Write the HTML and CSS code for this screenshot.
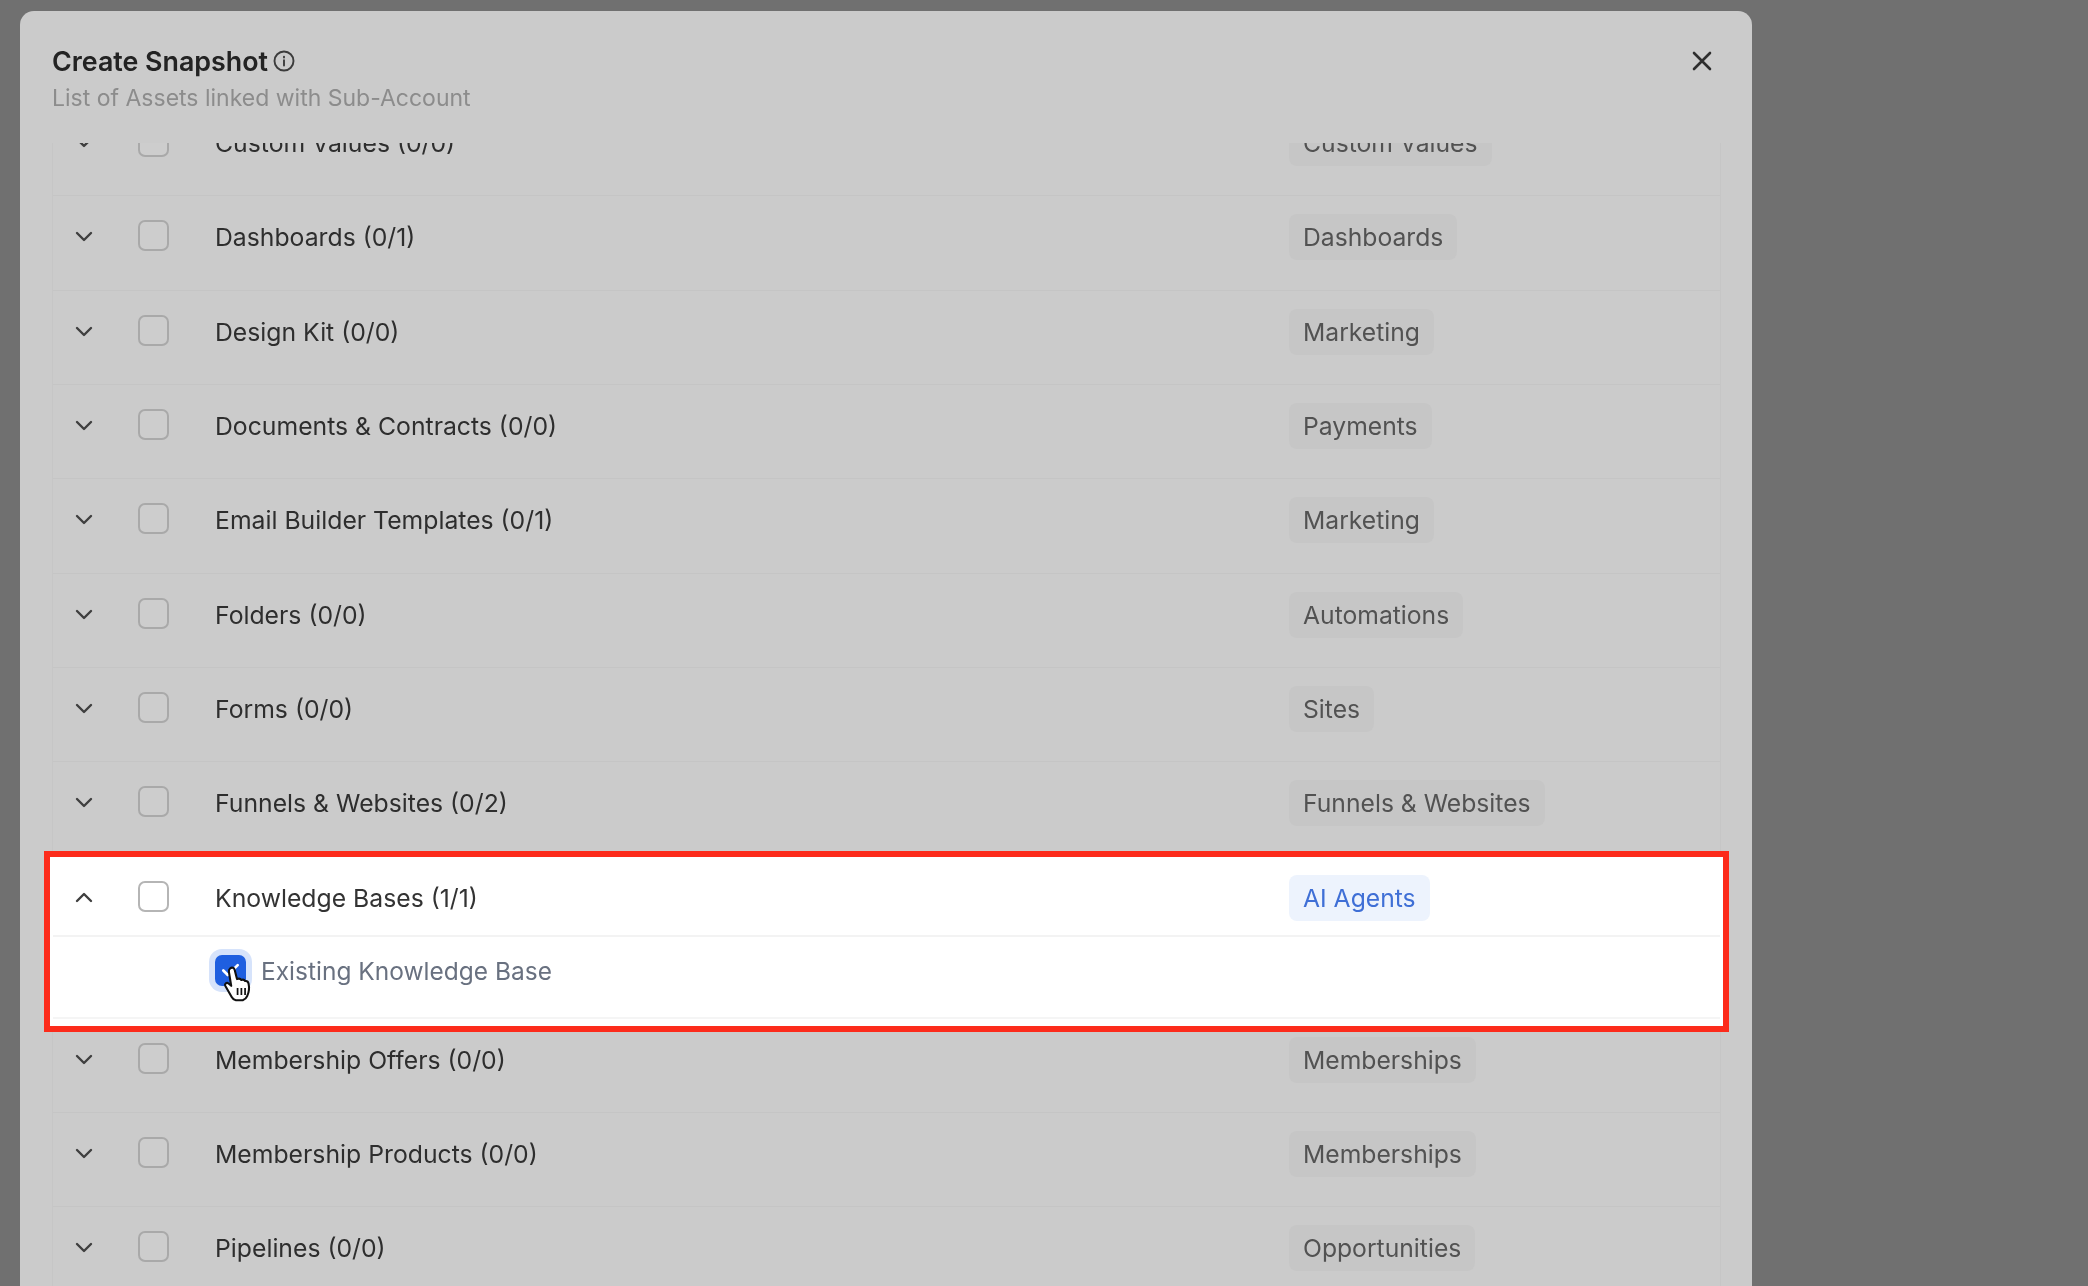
FILE: index.html
```html
<!DOCTYPE html>
<html lang="en">
<head>
<meta charset="utf-8">
<title>Create Snapshot</title>
<link rel="stylesheet" href="styles.css">
</head>
<body>
<div class="page">
  <section class="modal">
    <header class="modal-head">
      <div class="head-text">
        <h1 class="title">Create Snapshot
          <svg class="info" viewBox="0 0 22 22" aria-hidden="true"><circle cx="11" cy="11" r="9.5"/><path d="M11 10.2v5.3M11 6.6v.9"/></svg>
        </h1>
        <p class="subtitle">List of Assets linked with Sub-Account</p>
      </div>
      <svg class="close" viewBox="0 0 20 20" aria-hidden="true"><path d="M2 2l16 16M18 2L2 18"/></svg>
    </header>
    <div class="list-clip">
      <div class="list">
        <div class="row"><svg class="chev" viewBox="0 0 18 11"><path d="M2 2l7 7 7-7"/></svg><span class="box"></span><span class="label">Custom Values (0/0)</span><span class="tag">Custom Values</span></div>
        <div class="row"><svg class="chev" viewBox="0 0 18 11"><path d="M2 2l7 7 7-7"/></svg><span class="box"></span><span class="label">Dashboards (0/1)</span><span class="tag">Dashboards</span></div>
        <div class="row"><svg class="chev" viewBox="0 0 18 11"><path d="M2 2l7 7 7-7"/></svg><span class="box"></span><span class="label">Design Kit (0/0)</span><span class="tag">Marketing</span></div>
        <div class="row"><svg class="chev" viewBox="0 0 18 11"><path d="M2 2l7 7 7-7"/></svg><span class="box"></span><span class="label">Documents &amp; Contracts (0/0)</span><span class="tag">Payments</span></div>
        <div class="row"><svg class="chev" viewBox="0 0 18 11"><path d="M2 2l7 7 7-7"/></svg><span class="box"></span><span class="label">Email Builder Templates (0/1)</span><span class="tag">Marketing</span></div>
        <div class="row"><svg class="chev" viewBox="0 0 18 11"><path d="M2 2l7 7 7-7"/></svg><span class="box"></span><span class="label">Folders (0/0)</span><span class="tag">Automations</span></div>
        <div class="row"><svg class="chev" viewBox="0 0 18 11"><path d="M2 2l7 7 7-7"/></svg><span class="box"></span><span class="label">Forms (0/0)</span><span class="tag">Sites</span></div>
        <div class="row"><svg class="chev" viewBox="0 0 18 11"><path d="M2 2l7 7 7-7"/></svg><span class="box"></span><span class="label">Funnels &amp; Websites (0/2)</span><span class="tag">Funnels &amp; Websites</span></div>
        <div class="group">
          <div class="row open"><svg class="chev" viewBox="0 0 18 11"><path d="M2 9l7-7 7 7"/></svg><span class="box"></span><span class="label">Knowledge Bases (1/1)</span><span class="tag tag-blue">AI Agents</span></div>
          <div class="subrow">
            <span class="box checked"><svg viewBox="0 0 30 30"><path d="M7 15l5 5 11-11"/></svg></span>
            <span class="sublabel">Existing Knowledge Base</span>
            <svg class="hand" viewBox="0 0 26 32" aria-hidden="true"><path d="M7 3c1.600-1.400 3.600-.6 4 1.200l2 8c1.500-.7 3 -.4 3.700.8 1.300-.6 2.700-.2 3.300.9 1.400-.3 2.600.4 3 2 .8 3.500.4 7.500-1.200 11-.7 1.700-2 3-3.800 3.600h-6c-1.600-.3-2.800-1.300-3.600-2.800L2.800 18c-.8-1.600 1.200-3.300 2.800-2L8 18 6 6c-.2-1.200.2-2.300 1-3z"/><path class="hand-lines" d="M13.500 20v6M16.800 20v6M20 20v6"/></svg>
          </div>
        </div>
        <div class="row"><svg class="chev" viewBox="0 0 18 11"><path d="M2 2l7 7 7-7"/></svg><span class="box"></span><span class="label">Membership Offers (0/0)</span><span class="tag">Memberships</span></div>
        <div class="row"><svg class="chev" viewBox="0 0 18 11"><path d="M2 2l7 7 7-7"/></svg><span class="box"></span><span class="label">Membership Products (0/0)</span><span class="tag">Memberships</span></div>
        <div class="row"><svg class="chev" viewBox="0 0 18 11"><path d="M2 2l7 7 7-7"/></svg><span class="box"></span><span class="label">Pipelines (0/0)</span><span class="tag">Opportunities</span></div>
      </div>
    </div>
  </section>
</div>
</body>
</html>
```
FILE: styles.css
```css
* { box-sizing: border-box; }
html, body { margin: 0; height: 100%; overflow: hidden; background: #707070; }
body { font-family: Inter, "Liberation Sans", sans-serif; }
.page { height: 1286px; padding: 11px 336px 0 20px; filter: blur(0.7px); overflow: hidden; }
.modal { height: 1400px; background: #cbcbcb; border-radius: 14px 14px 0 0; display: flex; flex-direction: column; }
.modal-head { height: 132px; padding: 33px 40px 0 32px; display: flex; justify-content: space-between; align-items: flex-start; flex: none; }
.title { margin: 0; font-size: 26.8px; line-height: 34px; font-weight: 600; color: #232323; display: flex; align-items: center; gap: 5px; }
.info { width: 22px; height: 22px; fill: none; stroke: #3c3c3c; stroke-width: 1.9; stroke-linecap: round; }
.subtitle { margin: 6px 0 0; font-size: 23px; line-height: 28px; color: #8c8c8c; }
.close { width: 20px; height: 20px; margin-top: 7px; fill: none; stroke: #2e2e2e; stroke-width: 2.6; stroke-linecap: round; }
.list-clip { flex: 1; overflow: hidden; padding: 0 31px 0 32px; }
.list { border-left: 1px solid #c6c6c6; border-right: 1px solid #c6c6c6; margin-top: -41px; }
.row { height: 94.35px; padding: 18px 0 0 22px; display: grid; grid-template-columns: 18px 75px 1fr 431px; align-items: start; border-bottom: 1px solid #c5c5c5; }
.chev { width: 18px; height: 11px; margin-top: 17px; fill: none; stroke: #3f3f3f; stroke-width: 2.4; stroke-linecap: round; stroke-linejoin: round; }
.box { width: 31px; height: 31px; border: 2px solid #a9a9a9; border-radius: 7px; background: #cdcdcd; }
.row .box { margin: 6px 0 0 45px; }
.label { margin: 8px 0 0 47px; font-size: 24.75px; line-height: 30px; color: #2e2e2e; }
.tag { justify-self: start; height: 46px; padding: 0 14px; border-radius: 8px; background: #c6c6c6; color: #525252; font-size: 24.7px; line-height: 47px; white-space: nowrap; }
.group { position: relative; z-index: 1; }
.group::before { content: ""; position: absolute; z-index: -1; left: -9px; right: -9px; top: -6px; bottom: -13px; border: 6px solid #fc2b1b; background: #fff; }
.row.open { height: 80px; border-bottom: 2px solid #f3f3f3; }
.open .box { background: #fff; border-color: #b5b5b5; }
.open .label { color: #333; }
.tag.tag-blue { background: #edf3fd; color: #3f6fd6; }
.subrow { height: 82px; position: relative; padding: 18px 0 0 162px; display: flex; align-items: flex-start; gap: 15px; border-bottom: 2px solid #f5f5f5; }
.box.checked { flex: none; background: #1f5fe0; border-color: #1f5fe0; box-shadow: 0 0 0 6px #d6e3fb; display: block; }
.checked svg { display: block; width: 27px; height: 27px; fill: none; stroke: #fff; stroke-width: 3; stroke-linecap: round; stroke-linejoin: round; }
.sublabel { font-size: 24.5px; line-height: 32px; color: #697180; }
.hand { position: absolute; left: 169px; top: 28px; width: 30px; height: 37px; }
.hand path { fill: #fff; stroke: #111; stroke-width: 1.8; stroke-linejoin: round; }
.hand .hand-lines { fill: none; stroke-width: 1.5; }
```
